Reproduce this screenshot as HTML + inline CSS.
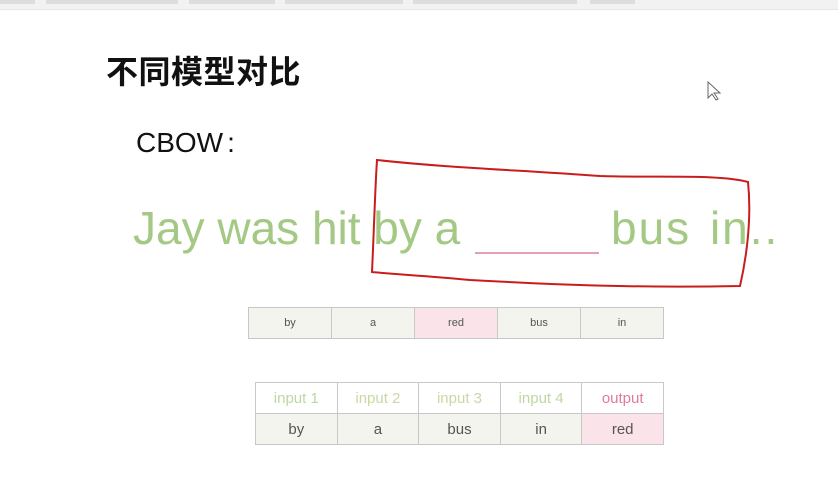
<!DOCTYPE html>
<html><head><meta charset="utf-8"><style>
body{margin:0;width:838px;height:479px;background:#fff;position:relative;overflow:hidden;font-family:"Liberation Sans","Noto Sans CJK SC",sans-serif}
.top{position:absolute;left:0;top:0;width:838px;height:9px;background:#f2f2f2;border-bottom:1px solid #e6e6e6}
.tab{position:absolute;top:0;height:4px;background:#ddd}
.t{position:absolute;white-space:nowrap}
table{position:absolute;border-collapse:collapse;table-layout:fixed}
td{border:1px solid #c8c8c8;text-align:center;color:#555;padding:0}
</style></head><body>
<div class="top"><div class="tab" style="left:0;width:35px"></div><div class="tab" style="left:46px;width:132px"></div><div class="tab" style="left:189px;width:86px"></div><div class="tab" style="left:285px;width:118px"></div><div class="tab" style="left:413px;width:164px"></div><div class="tab" style="left:590px;width:45px"></div></div>
<div class="t" style="left:106px;top:47px;font-size:32px;font-weight:bold;color:#111;letter-spacing:0.5px">不同模型对比</div>
<div class="t" style="left:136px;top:127px;font-size:28px;color:#111">CBOW<span style="margin-left:4px">:</span></div>
<div class="t" style="left:133px;top:201px;font-size:46px;color:#a3c985">Jay was hit by a</div>
<div style="position:absolute;left:475px;top:252px;width:124px;height:2px;background:#e2a0b4"></div>
<div class="t" style="left:611px;top:201px;font-size:46px;color:#a3c985;letter-spacing:2px;word-spacing:4px">bus in..</div>
<svg style="position:absolute;left:0;top:0" width="838" height="479"><path d="M377 160 C450 168 520 170 600 176 C660 178 720 174 748 182 C752 220 746 260 740 286 C640 288 560 285 470 280 C430 276 390 274 372 272 C374 230 375 190 377 160Z" fill="none" stroke="#c81d1d" stroke-width="2"/>
<path d="M708 82 L708 98 L712 94 L716 100 L718 99 L714 93 L720 93 Z" fill="#fff" stroke="#666" stroke-width="1"/></svg>
<table style="left:248px;top:307px;width:416px;height:32px;font-size:11px;background:#f3f4ee"><tr><td>by</td><td>a</td><td style="background:#fbe3ea">red</td><td>bus</td><td>in</td></tr></table>
<table style="left:255px;top:382px;width:409px;height:63px;font-size:15px"><tr style="height:31px"><td style="color:#bdd8a3">input 1</td><td style="color:#c8d9a3">input 2</td><td style="color:#c8d9a3">input 3</td><td style="color:#bdd8a3">input 4</td><td style="color:#e07aa0">output</td></tr>
<tr style="background:#f3f4ee"><td>by</td><td>a</td><td>bus</td><td>in</td><td style="background:#fbe3ea">red</td></tr></table>
</body></html>
